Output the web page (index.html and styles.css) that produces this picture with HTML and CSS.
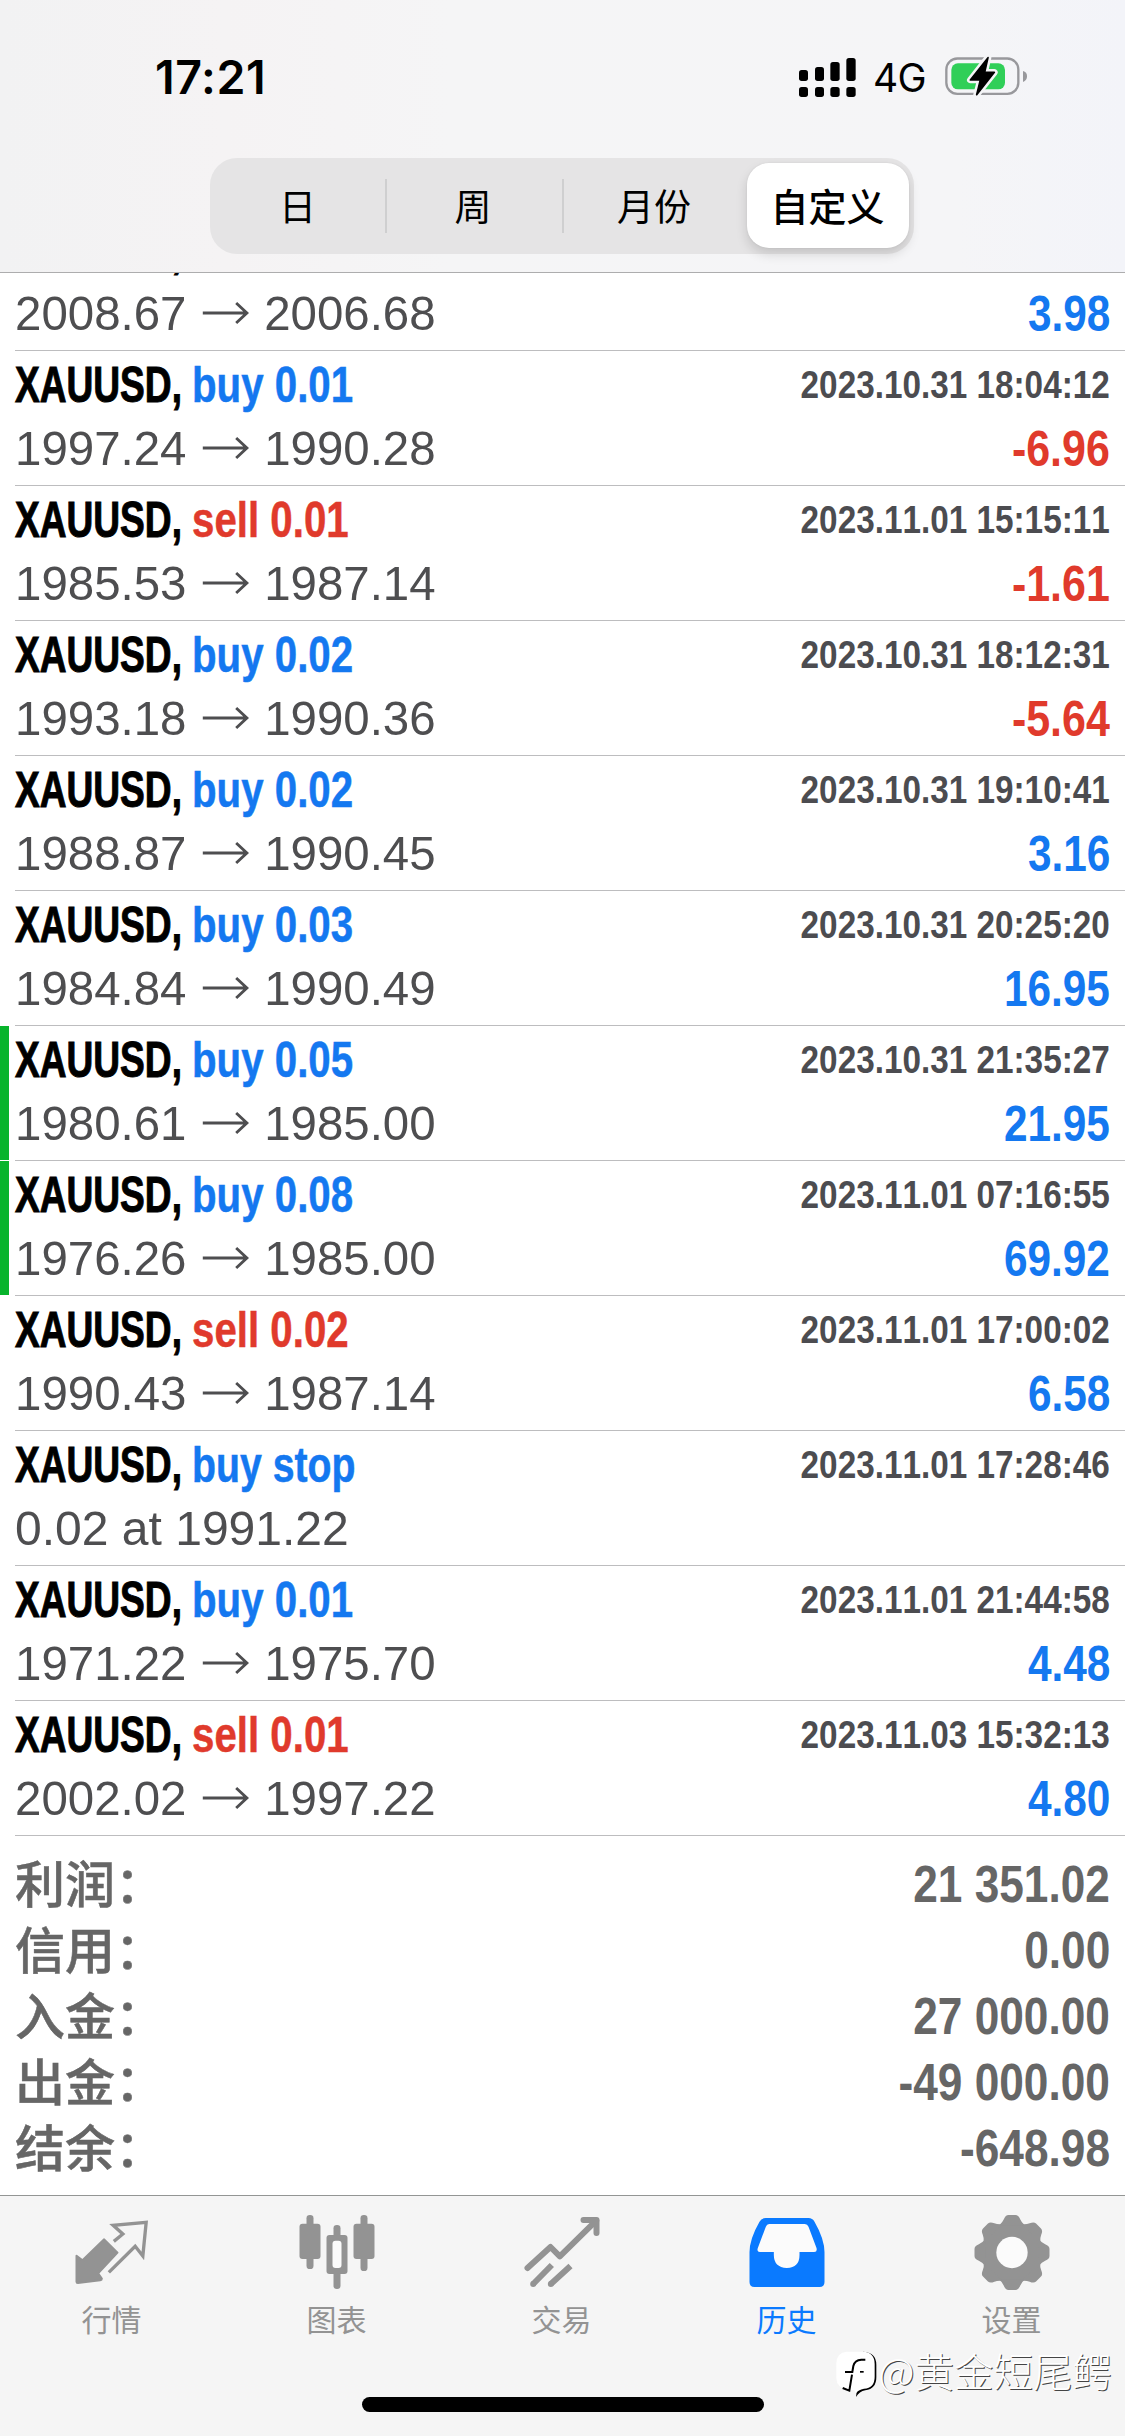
FILE: index.html
```html
<!DOCTYPE html>
<html lang="zh-CN">
<head>
<meta charset="utf-8">
<title>历史</title>
<link rel="stylesheet" href="styles.css">
</head>
<body>
<svg width="0" height="0" class="defs"><symbol id="to" viewBox="0 0 53 24"><path d="M3 12H48M37.500 2L48.500 12L37.500 22" fill="none" stroke="currentColor" stroke-width="3"/></symbol></svg>
<div class="screen">
  <header class="header">
    <div class="status">
      <span class="clock">17:21</span>
      <div class="status-right">
        <svg class="signal" viewBox="57 78 171 117"><rect x="57" y="114" width="27" height="33" rx="8"/><rect x="105" y="105" width="27" height="42" rx="8"/><rect x="151" y="90" width="28" height="57" rx="8"/><rect x="199" y="78" width="28" height="69" rx="8"/><rect x="57" y="165" width="27" height="30" rx="8"/><rect x="105" y="165" width="27" height="30" rx="8"/><rect x="151" y="165" width="28" height="30" rx="8"/><rect x="199" y="165" width="28" height="30" rx="8"/></svg>
        <span class="network">4G</span>
        <svg class="battery" viewBox="495 72 249 126"><rect x="499" y="82.500" width="216" height="106" rx="33" fill="none" stroke="#98989c" stroke-width="7"/><rect x="514" y="97" width="161" height="78" rx="20" fill="#30cf58"/><path d="M729 120q12 3 12 16t-12 17z" fill="#98989c"/><path d="M624 80L571 147H601L590 191L643 124H614Z" fill="#000" stroke="#f5f5f7" stroke-width="20" stroke-linejoin="round" paint-order="stroke"/><path d="M624 80L571 147H601L590 191L643 124H614Z" stroke="#000" stroke-width="5" stroke-linejoin="round"/></svg>
      </div>
    </div>
    <nav class="segments">
      <span class="segment first">日</span>
      <span class="segment ruled">周</span>
      <span class="segment ruled">月份</span>
      <span class="segment selected">自定义</span>
    </nav>
  </header>

  <main class="history">
    <ul class="deals">
      <li class="deal"><div class="line"><span class="symbol">XAUUSD,</span></div><div class="line"><span class="prices">2008.67 <svg class="arrow"><use href="#to"/></svg> 2006.68</span><b class="profit">3.98</b></div></li>
      <li class="deal"><div class="line"><span class="symbol">XAUUSD,</span><span class="side">buy 0.01</span><time>2023.10.31 18:04:12</time></div><div class="line"><span class="prices">1997.24 <svg class="arrow"><use href="#to"/></svg> 1990.28</span><b class="profit loss">-6.96</b></div></li>
      <li class="deal"><div class="line"><span class="symbol">XAUUSD,</span><span class="side sell">sell 0.01</span><time>2023.11.01 15:15:11</time></div><div class="line"><span class="prices">1985.53 <svg class="arrow"><use href="#to"/></svg> 1987.14</span><b class="profit loss">-1.61</b></div></li>
      <li class="deal"><div class="line"><span class="symbol">XAUUSD,</span><span class="side">buy 0.02</span><time>2023.10.31 18:12:31</time></div><div class="line"><span class="prices">1993.18 <svg class="arrow"><use href="#to"/></svg> 1990.36</span><b class="profit loss">-5.64</b></div></li>
      <li class="deal"><div class="line"><span class="symbol">XAUUSD,</span><span class="side">buy 0.02</span><time>2023.10.31 19:10:41</time></div><div class="line"><span class="prices">1988.87 <svg class="arrow"><use href="#to"/></svg> 1990.45</span><b class="profit">3.16</b></div></li>
      <li class="deal"><div class="line"><span class="symbol">XAUUSD,</span><span class="side">buy 0.03</span><time>2023.10.31 20:25:20</time></div><div class="line"><span class="prices">1984.84 <svg class="arrow"><use href="#to"/></svg> 1990.49</span><b class="profit">16.95</b></div></li>
      <li class="deal marked"><div class="line"><span class="symbol">XAUUSD,</span><span class="side">buy 0.05</span><time>2023.10.31 21:35:27</time></div><div class="line"><span class="prices">1980.61 <svg class="arrow"><use href="#to"/></svg> 1985.00</span><b class="profit">21.95</b></div></li>
      <li class="deal marked"><div class="line"><span class="symbol">XAUUSD,</span><span class="side">buy 0.08</span><time>2023.11.01 07:16:55</time></div><div class="line"><span class="prices">1976.26 <svg class="arrow"><use href="#to"/></svg> 1985.00</span><b class="profit">69.92</b></div></li>
      <li class="deal"><div class="line"><span class="symbol">XAUUSD,</span><span class="side sell">sell 0.02</span><time>2023.11.01 17:00:02</time></div><div class="line"><span class="prices">1990.43 <svg class="arrow"><use href="#to"/></svg> 1987.14</span><b class="profit">6.58</b></div></li>
      <li class="deal"><div class="line"><span class="symbol">XAUUSD,</span><span class="side pending">buy stop</span><time>2023.11.01 17:28:46</time></div><div class="line"><span class="prices order">0.02 at 1991.22</span></div></li>
      <li class="deal"><div class="line"><span class="symbol">XAUUSD,</span><span class="side">buy 0.01</span><time>2023.11.01 21:44:58</time></div><div class="line"><span class="prices">1971.22 <svg class="arrow"><use href="#to"/></svg> 1975.70</span><b class="profit">4.48</b></div></li>
      <li class="deal"><div class="line"><span class="symbol">XAUUSD,</span><span class="side sell">sell 0.01</span><time>2023.11.03 15:32:13</time></div><div class="line"><span class="prices">2002.02 <svg class="arrow"><use href="#to"/></svg> 1997.22</span><b class="profit">4.80</b></div></li>
    </ul>
    <dl class="summary">
      <div class="total"><dt>利润：</dt><dd>21 351.02</dd></div>
      <div class="total"><dt>信用：</dt><dd>0.00</dd></div>
      <div class="total"><dt>入金：</dt><dd>27 000.00</dd></div>
      <div class="total"><dt>出金：</dt><dd>-49 000.00</dd></div>
      <div class="total"><dt>结余：</dt><dd>-648.98</dd></div>
    </dl>
  </main>

  <footer class="tabbar">
    <nav class="tabs">
      <a class="tab">
        <svg viewBox="37.500 24 240 240"><path d="M48 152L66 166L131 103L171 143L113 205L124 221Q124 225 119 226L52 234Q48 234 48 230Z" fill="currentColor" stroke="currentColor" stroke-width="6" stroke-linejoin="round"/><path d="M160 109L187 87L158 61L257 52L247 153L224 124L145 202" fill="none" stroke="currentColor" stroke-width="10"/></svg>
        <span>行情</span>
      </a>
      <a class="tab">
        <svg viewBox="712.500 24 240 240" fill="currentColor"><rect x="738" y="30" width="21" height="162" rx="10"/><rect x="717" y="56" width="63" height="106" rx="9"/><rect x="900" y="30" width="21" height="168" rx="10"/><rect x="879" y="56" width="63" height="106" rx="9"/><rect x="819" y="60" width="21" height="192" rx="10"/><rect x="798" y="90" width="63" height="117" rx="9"/><rect x="816" y="107" width="27" height="82" rx="9" fill="#fbfbfb"/></svg>
        <span>图表</span>
      </a>
      <a class="tab">
        <svg viewBox="37.500 24 240 240" fill="none" stroke="currentColor" stroke-width="18"><path d="M51 189L120 126L148 154L257 47" stroke-linecap="round" stroke-linejoin="round"/><path d="M219 45H258V84" stroke-linecap="round" stroke-linejoin="round"/><path d="M124 180L68 237M180 183L121 237"/><g fill="currentColor" stroke="none"><circle cx="68" cy="237" r="9"/><circle cx="121" cy="237" r="9"/></g></svg>
        <span>交易</span>
      </a>
      <a class="tab active">
        <svg viewBox="712.500 24 240 240"><path d="M766 39H894Q906 39 912 50Q942 102 942 142V231Q942 246 927 246H732Q717 246 717 231V142Q717 102 747 50Q753 39 766 39Z" fill="currentColor"/><path d="M776 57H883Q891 57 894 65L918 129Q921 141 911 141H867V150Q867 188 829 189Q790 187 790 150V141H748Q738 141 742 129L766 65Q769 57 776 57Z" fill="#fbfbfb"/></svg>
        <span>历史</span>
      </a>
      <a class="tab">
        <svg viewBox="37.500 24 240 240"><defs><path id="tooth" d="M115 62Q126 53 130 43Q135 30 144 30H165Q174 30 179 43Q183 53 194 62Z"/></defs><g fill="currentColor"><circle cx="154.500" cy="142.500" r="90"/><use href="#tooth"/><use href="#tooth" transform="rotate(45 154.500 142.500)"/><use href="#tooth" transform="rotate(90 154.500 142.500)"/><use href="#tooth" transform="rotate(135 154.500 142.500)"/><use href="#tooth" transform="rotate(180 154.500 142.500)"/><use href="#tooth" transform="rotate(225 154.500 142.500)"/><use href="#tooth" transform="rotate(270 154.500 142.500)"/><use href="#tooth" transform="rotate(315 154.500 142.500)"/></g><circle cx="154.500" cy="142.500" r="47" fill="#fbfbfb"/></svg>
        <span>设置</span>
      </a>
    </nav>
    <div class="home-indicator"></div>
    <div class="watermark">
      <svg viewBox="36 36 132 144"><path d="M124 41Q163 44 163 80V118Q163 153 130 157Q112 160 102 177Q104 165 104 150Z" fill="#000"/><path d="M74 41H124Q158 43 158 78V116Q158 150 126 152Q108 155 102 166L96 156L78 156Q44 150 43 120V76Q44 43 74 41Z" fill="#fff"/><path d="M130 65H118Q98 66 94 84L91 102H69M90 110L82 158L62 150" fill="none" stroke="#000" stroke-width="6"/><rect x="114" y="99" width="11" height="5"/></svg>
      <span>@黄金短尾鳄</span>
    </div>
  </footer>
</div>
</body>
</html>
```
FILE: styles.css
```css
* { box-sizing: border-box; margin: 0; padding: 0; }

body {
  width: 1125px;
  background: #fff;
  font-family: "Liberation Sans", "Noto Sans CJK SC", sans-serif;
  font-kerning: none;
}

.defs { display: block; }

.screen {
  display: flex;
  flex-direction: column;
  height: 2436px;
  overflow: hidden;
}

/* Header */
.header {
  position: relative;
  z-index: 1;
  flex: none;
  display: flex;
  flex-direction: column;
  align-items: center;
  height: 273px;
  border-bottom: 1px solid #adadae;
  background: linear-gradient(90deg, #f2f2f3 0, #f5f3f4 20%, #f5f5f6 40%, #f5f5f7 85%, #f3f4f9 100%);
}

.status {
  display: flex;
  justify-content: space-between;
  align-items: center;
  width: 100%;
  height: 158px;
  padding: 0 97px 4px 155px;
}

.clock {
  font: 600 46.500px/60px Inter, sans-serif;
  letter-spacing: .6px;
}

.status-right { display: flex; align-items: center; }
.signal { width: 57px; height: 39px; }
.network { margin: 1px 0 0 17px; font: 400 39px/48px Inter, sans-serif; width: 56px; letter-spacing: -.6px; }
.battery { width: 83px; height: 42px; margin: -2px 0 0 16px; }

.segments {
  display: grid;
  grid-template-columns: 170px 177px 185px 162px;
  width: 704px;
  height: 96px;
  margin-right: 2px;
  padding: 5px 5px 6px 5px;
  border-radius: 27px;
  background: #e5e4e5;
}

.segment {
  display: flex;
  align-items: center;
  justify-content: center;
  padding-bottom: 2px;
  font: 400 37px/50px "Noto Sans CJK SC", sans-serif;
}

.first { padding-right: 4px; }

.ruled {
  background: linear-gradient(#cfcfd0, #cfcfd0) left center / 2px 54px no-repeat;
}

.selected {
  border-radius: 22px;
  background: #fff;
  font-weight: 500;
  font-size: 38px;
  box-shadow: 0 6px 12px rgba(0, 0, 0, .14), 0 0 2px rgba(0, 0, 0, .08);
}

/* Deal list */
.history { flex: 1; min-height: 0; overflow: hidden; }

/* The list is scrolled: its first row is partly under the header */
.deals { margin-top: -57px; list-style: none; }

.deal {
  height: 135px;
  padding: 3px 15px 0 15px;
  background: linear-gradient(#bdbdbf, #bdbdbf) 15px bottom / 100% 1px no-repeat;
}

.marked {
  background:
    linear-gradient(#08b42c, #08b42c) left top / 9px 134px no-repeat,
    linear-gradient(#bdbdbf, #bdbdbf) 15px bottom / 100% 1px no-repeat;
}

.line { display: flex; height: 63px; line-height: 63px; white-space: nowrap; }

.symbol, .side {
  font-size: 50px;
  font-weight: 700;
  transform-origin: left;
}

.symbol { width: 177px; color: #000; transform: scaleX(.742); -webkit-text-stroke: 1px; }
.side { transform: scaleX(.805); color: #1478f0; -webkit-text-stroke: .5px; }
.side.sell { color: #e03a2c; }
.side.pending { transform: scaleX(.785); }

time {
  margin-left: auto;
  color: #4c4c50;
  font-size: 39.500px;
  line-height: 61px;
  font-weight: 700;
  transform: scaleX(.843);
  transform-origin: right;
}

.prices { color: #4e4e50; font-size: 49px; transform: scaleX(.968); transform-origin: left; }
.order { transform: scaleX(.98); }

.arrow {
  width: 53px;
  height: 24px;
  vertical-align: 5px;
}

.profit {
  margin-left: auto;
  color: #1478f0;
  font-size: 49.500px;
  transform: scaleX(.855);
  transform-origin: right;
}

.loss { color: #e03a2c; transform: scaleX(.868); }

/* Totals */
.summary { padding: 16px 15px 0 15px; color: #666; }
.total { display: flex; justify-content: space-between; height: 66px; line-height: 66px; }
dt { font: 500 50px/58px "Noto Sans CJK SC", sans-serif; -webkit-text-stroke: .5px; }
dd { font-size: 51px; font-weight: 700; transform: scaleX(.867); transform-origin: right; }

/* Tab bar */
.tabbar {
  position: relative;
  z-index: 1;
  flex: none;
  display: flex;
  flex-direction: column;
  align-items: center;
  height: 241px;
  border-top: 1px solid #939594;
  background: #f5f5f5;
}

.tabs {
  display: grid;
  grid-template-columns: repeat(5, 225px);
  height: 201px;
  padding-top: 17px;
}

.tab {
  display: flex;
  flex-direction: column;
  align-items: center;
  gap: 8px;
  height: 124px;
  color: #939393;
  font: 400 30px/34px "Noto Sans CJK SC", sans-serif;
}

.tab svg { width: 80px; height: 80px; }
.tab span { padding-right: 2px; }
.active { color: #0a7aff; }

.home-indicator { width: 402px; height: 15px; border-radius: 8px; background: #000; }

.watermark {
  position: absolute;
  right: 13px;
  top: 154px;
  display: flex;
  align-items: flex-start;
  color: #fff;
  font: 300 39.500px/40px "Noto Sans CJK SC", sans-serif;
  text-shadow: 1px 1px 0 #444;
}

.watermark svg { width: 44px; height: 48px; margin-right: 1px; }
```
